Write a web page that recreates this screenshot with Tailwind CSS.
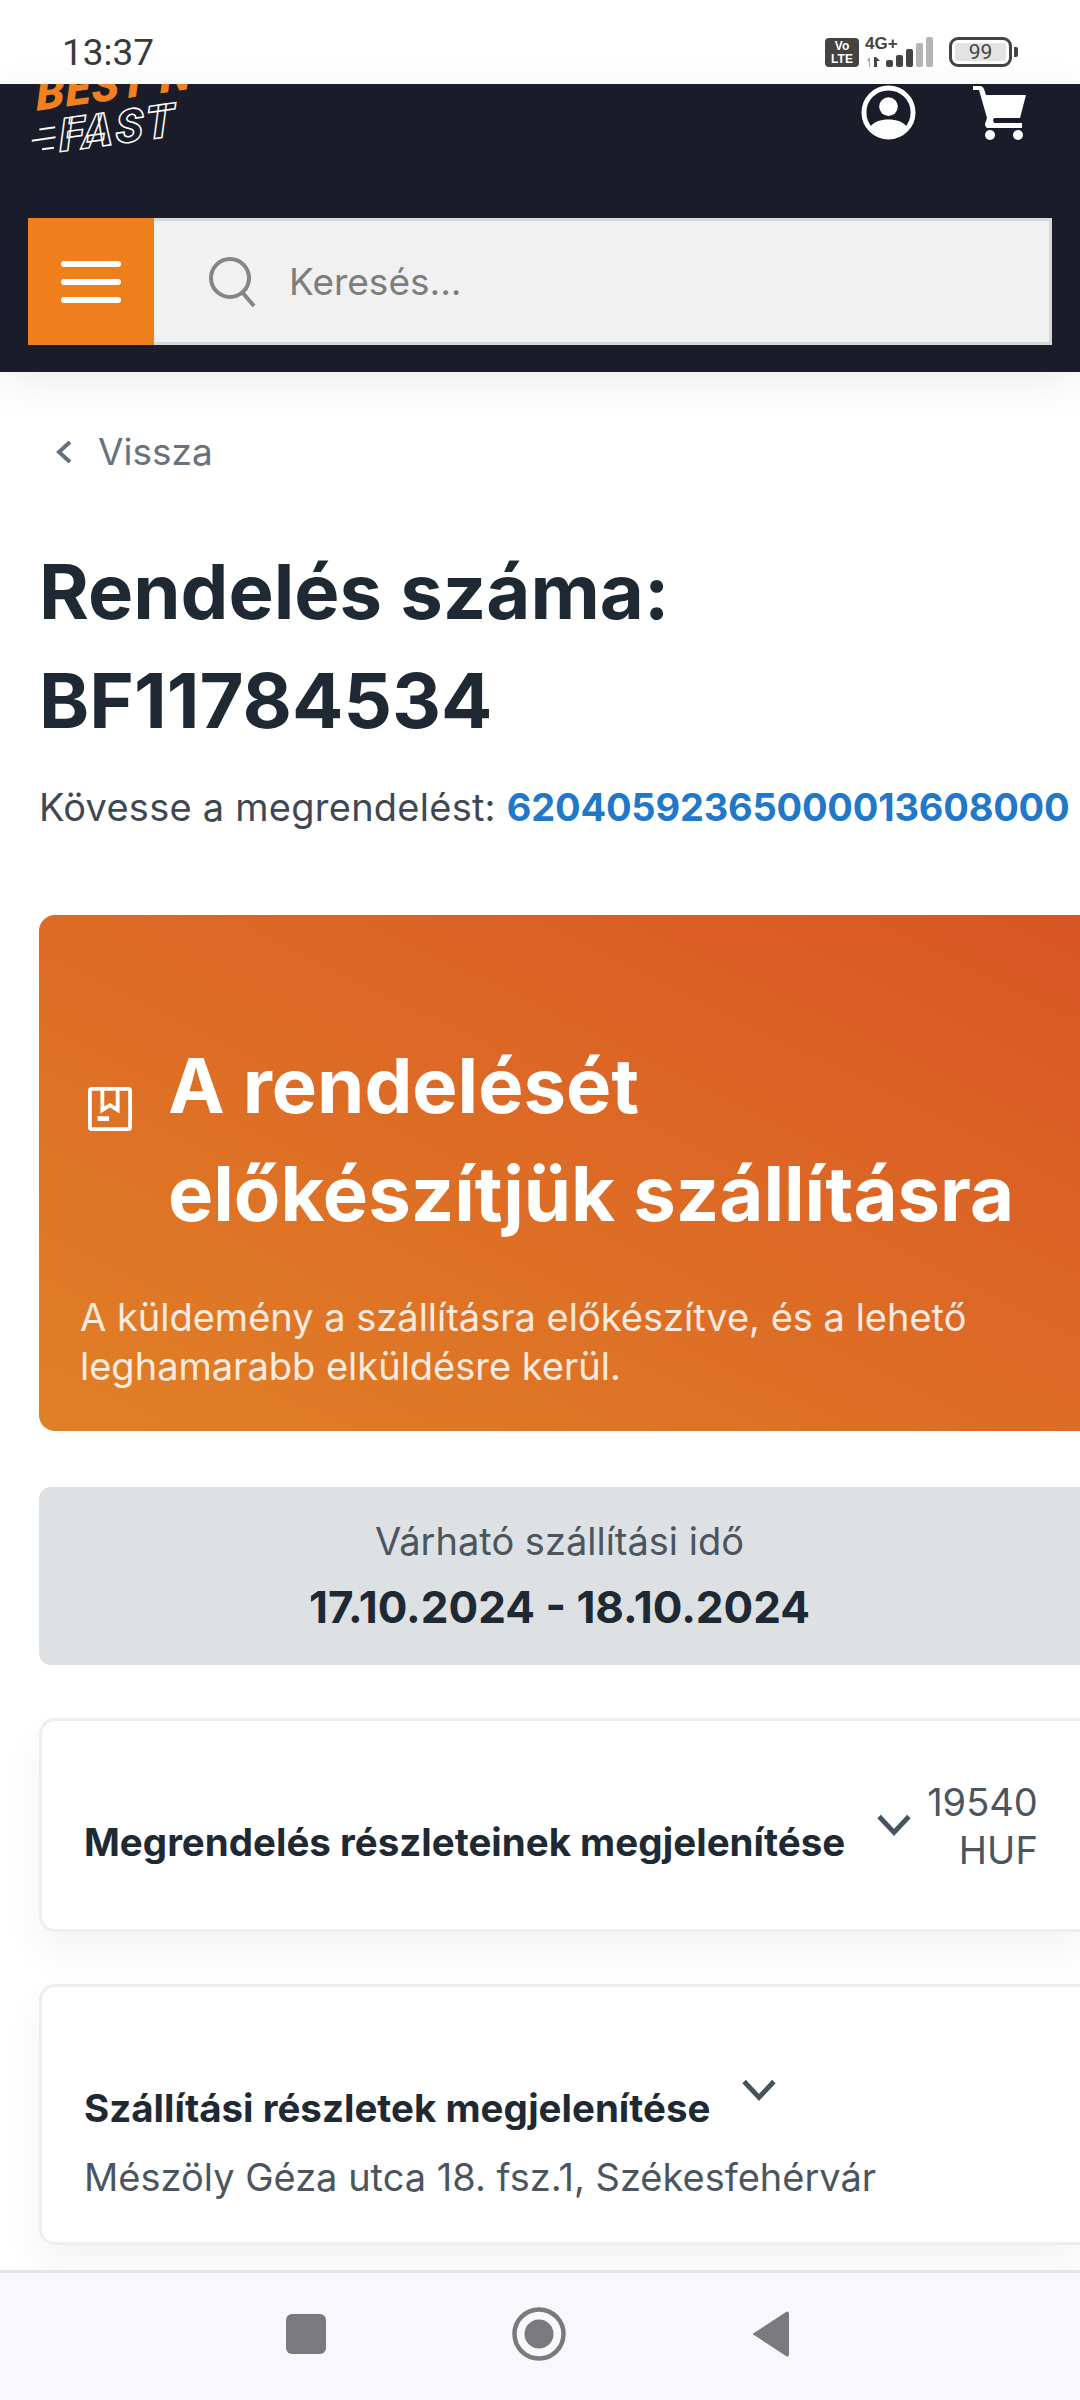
<!DOCTYPE html>
<html lang="hu">
<head>
  <meta charset="UTF-8">
  <meta name="viewport" content="width=device-width, initial-scale=1.0">
  <title>Rendelés</title>
  <script src="https://cdn.jsdelivr.net/npm/@tailwindcss/browser@4"></script>
</head>
<body class="font-['Inter','Noto_Sans',sans-serif] bg-white">
  <div class="w-[1080px] h-[2400px] overflow-hidden flex flex-col relative">

    <!-- status bar -->
    <div class="h-[84px] shrink-0 flex items-center justify-between pl-[62px] pr-[62px] pt-[20px] bg-white">
      <span class="text-[37px] leading-none text-[#3a3a3a] font-['Roboto',sans-serif]">13:37</span>
      <div class="flex items-center gap-[5px]">
        <div class="w-[34px] h-[29px] rounded-[4px] bg-[#444] text-white text-[12px] leading-[13px] font-bold text-center pt-[2px] font-['Liberation_Sans',sans-serif]">Vo<br>LTE</div>
        <svg width="72" height="32" viewBox="0 0 72 32" class="overflow-visible">
          <text x="1" y="13" font-size="17" font-weight="700" fill="#444" font-family="Liberation Sans">4G+</text>
          <path d="M3 24l3-3v10H5v-5z" fill="#aaa"/>
          <path d="M10 21h2l4 4h-3v6h-3z" fill="#444"/>
          <g fill="#444">
            <rect x="22" y="24" width="7" height="7" rx="2"/><rect x="32" y="19" width="7" height="12" rx="2"/><rect x="42" y="13" width="7" height="18" rx="2"/>
          </g>
          <g fill="#b5b5b5"><rect x="52" y="7" width="7" height="24" rx="2"/><rect x="62" y="1" width="7" height="30" rx="2"/></g>
        </svg>
        <div class="flex items-center ml-[8px]">
          <div class="w-[63px] h-[30px] rounded-[9px] border-[3px] border-[#444] p-[3px]">
            <div class="w-full h-full rounded-[3px] bg-[#e3e3e3] text-[21px] leading-[18px] text-[#444] text-center font-['Roboto',sans-serif]">99</div>
          </div>
          <div class="w-[4px] h-[10px] bg-[#444] rounded-r-[2px] ml-[2px]"></div>
        </div>
      </div>
    </div>

    <!-- header -->
    <header class="h-[288px] shrink-0 bg-[#1a1d29] overflow-hidden relative z-10 shadow-[0_10px_40px_rgba(0,0,0,0.08)]">
      <div class="h-[134px] flex justify-between pl-[30px] pr-[54px]">
        <div class="-rotate-[8deg] origin-left italic font-black font-['Roboto',sans-serif] -skew-x-6 -mt-[10px]">
          <div class="text-[46px] leading-[44px] text-[#f08020] pl-[8px] tracking-[1px] whitespace-nowrap">BEST N'</div>
          <div class="text-[46px] leading-[44px] text-transparent [-webkit-text-stroke:1.5px_white] pl-[30px] font-black tracking-[3px] relative">
            <span class="absolute left-[10px] top-[12px] w-[16px] h-[2px] bg-white"></span>
            <span class="absolute left-[2px] top-[22px] w-[24px] h-[2px] bg-white"></span>
            <span class="absolute left-[12px] top-[32px] w-[12px] h-[2px] bg-white"></span>
            FAST
          </div>
        </div>
        <div class="flex items-start gap-[56px]">
          <svg class="w-[55px] h-[55px] mt-[1px]" viewBox="0 0 56 56">
            <circle cx="28" cy="28" r="25" fill="none" stroke="#fff" stroke-width="5"/>
            <circle cx="28" cy="22" r="9.5" fill="#fff"/>
            <path d="M8 44c5-7 12-9 20-9s15 2 20 9c-4 6-12 10-20 10S12 50 8 44z" fill="#fff"/>
          </svg>
          <svg class="w-[54px] h-[54px] mt-[2px]" viewBox="0 0 54 54">
            <path d="M1 0h7c2 0 3 1 4 3l2 6h40l-6 23H22l-1 2 1 3h28v5H16c-2 0-3-2-3-4l2-6L7 4H1z" fill="#fff"/>
            <circle cx="18" cy="49" r="5" fill="#fff"/><circle cx="46" cy="49" r="5" fill="#fff"/>
          </svg>
        </div>
      </div>
      <div class="mx-[28px] h-[127px] flex">
        <div class="w-[126px] bg-[#ef7f1c] flex flex-col items-center justify-center gap-[12px]">
          <span class="w-[60px] h-[6px] rounded-full bg-white"></span>
          <span class="w-[60px] h-[6px] rounded-full bg-white"></span>
          <span class="w-[60px] h-[6px] rounded-full bg-white"></span>
        </div>
        <div class="flex-1 bg-[#f1f1f1] border-[3px] border-[#d5d9dc] border-l-0 flex items-center pl-[54px] gap-[33px]">
          <svg class="w-[48px] h-[50px]" viewBox="0 0 48 50" fill="none" stroke="#858585" stroke-width="4"><circle cx="22" cy="21" r="19"/><path d="M34 35l12 14"/></svg>
          <span class="text-[37px] text-[#7d7d7d]">Keresés...</span>
        </div>
      </div>
    </header>

    <!-- main -->
    <main class="flex-1 min-h-0 pl-[39px] flex flex-col">
      <a class="flex items-center gap-[25px] mt-[56px] pl-[16px] h-[48px] text-[37px] text-[#67727e]">
        <svg class="w-[18px] h-[26px]" viewBox="0 0 18 26" fill="none" stroke="#67727e" stroke-width="4"><path d="M15 3L4 13l11 10"/></svg>
        Vissza
      </a>
      <h1 class="mt-[61px] text-[76px] leading-[109px] font-bold text-[#1f2933]">Rendelés száma:<br>BF11784534</h1>
      <p class="mt-[28px] text-[38px] leading-[48px] tracking-[0.25px] text-[#3f4852] whitespace-nowrap">Kövesse a megrendelést: <span class="font-bold tracking-[-0.2px] text-[#1f78c8]">62040592365000013608000</span></p>

      <section class="mt-[84px] h-[516px] shrink-0 rounded-l-[16px] bg-linear-to-tr from-[#e08026] to-[#d95525] pl-[41px] pt-[116px] text-white">
        <div class="flex items-start gap-[36px]">
          <svg class="w-[44px] h-[44px] shrink-0 mt-[56px] ml-[8px]" viewBox="0 0 46 46" fill="none" stroke="#fff" stroke-width="4"><rect x="2" y="2" width="42" height="42" rx="2"/><path d="M15 3v21l8-5 8 5V3"/><path d="M10 33h12" stroke-width="5"/></svg>
          <h2 class="text-[76px] leading-[108px] font-bold whitespace-nowrap">A rendelését<br>előkészítjük szállításra</h2>
        </div>
        <p class="mt-[46px] text-[38px] leading-[49px] text-white/85 whitespace-nowrap">A küldemény a szállításra előkészítve, és a lehető<br>leghamarabb elküldésre kerül.</p>
      </section>

      <section class="mt-[56px] h-[178px] shrink-0 rounded-l-[12px] bg-[#dde1e4] text-center pt-[30px]">
        <p class="text-[38px] leading-[48px] text-[#4b5560]">Várható szállítási idő</p>
        <p class="mt-[16px] text-[44px] leading-[52px] font-bold text-[#1f2933]">17.10.2024 - 18.10.2024</p>
      </section>

      <section class="mt-[53px] h-[214px] shrink-0 rounded-l-[16px] border-[3px] border-r-0 border-[#eeeeee] shadow-[0_20px_40px_rgba(0,0,0,0.05)] pl-[42px] flex items-center">
        <div class="flex items-start">
          <span class="text-[38.5px] leading-[48px] font-bold text-[#1f2933] mt-[42px] whitespace-nowrap">Megrendelés részleteinek megjelenítése</span>
          <svg class="w-[34px] h-[24px] mt-[37px] ml-[32px] shrink-0" viewBox="0 0 32 22" fill="none" stroke="#47525c" stroke-width="4.5"><path d="M2 3l14 15L30 3"/></svg>
          <div class="ml-[16px] text-right text-[38px] leading-[48px] text-[#4b5560] mt-[2px]">19540<br>HUF</div>
        </div>
      </section>

      <section class="mt-[52px] h-[261px] shrink-0 rounded-l-[16px] border-[3px] border-r-0 border-[#eeeeee] shadow-[0_20px_40px_rgba(0,0,0,0.05)] pl-[42px] pt-[97px]">
        <div class="flex items-start gap-[32px]">
          <span class="text-[38.5px] leading-[48px] font-bold text-[#1f2933] whitespace-nowrap">Szállítási részletek megjelenítése</span>
          <svg class="w-[34px] h-[24px] -mt-[6px] shrink-0" viewBox="0 0 32 22" fill="none" stroke="#47525c" stroke-width="4.5"><path d="M2 3l14 15L30 3"/></svg>
        </div>
        <p class="mt-[21px] text-[38px] leading-[48px] text-[#4b5560]">Mészöly Géza utca 18. fsz.1, Székesfehérvár</p>
      </section>
    </main>

    <!-- android nav -->
    <nav class="h-[130px] shrink-0 bg-[#f7f7fd] border-t-[3px] border-[#e4e4ea] flex items-center justify-center gap-[186px] relative z-10 pr-[4px] pb-[6px]">
      <span class="w-[40px] h-[40px] rounded-[6px] bg-[#7a7a7c]"></span>
      <svg class="w-[54px] h-[54px]" viewBox="0 0 54 54"><circle cx="27" cy="27" r="24.5" fill="none" stroke="#7a7a7c" stroke-width="4.5"/><circle cx="27" cy="27" r="14.5" fill="#7a7a7c"/></svg>
      <svg class="w-[38px] h-[46px]" viewBox="0 0 38 46"><path d="M37 2v42a2 2 0 0 1-3 1L2 24a1 1 0 0 1 0-2L34 1a2 2 0 0 1 3 1z" fill="#7a7a7c"/></svg>
    </nav>
  </div>
</body>
</html>
